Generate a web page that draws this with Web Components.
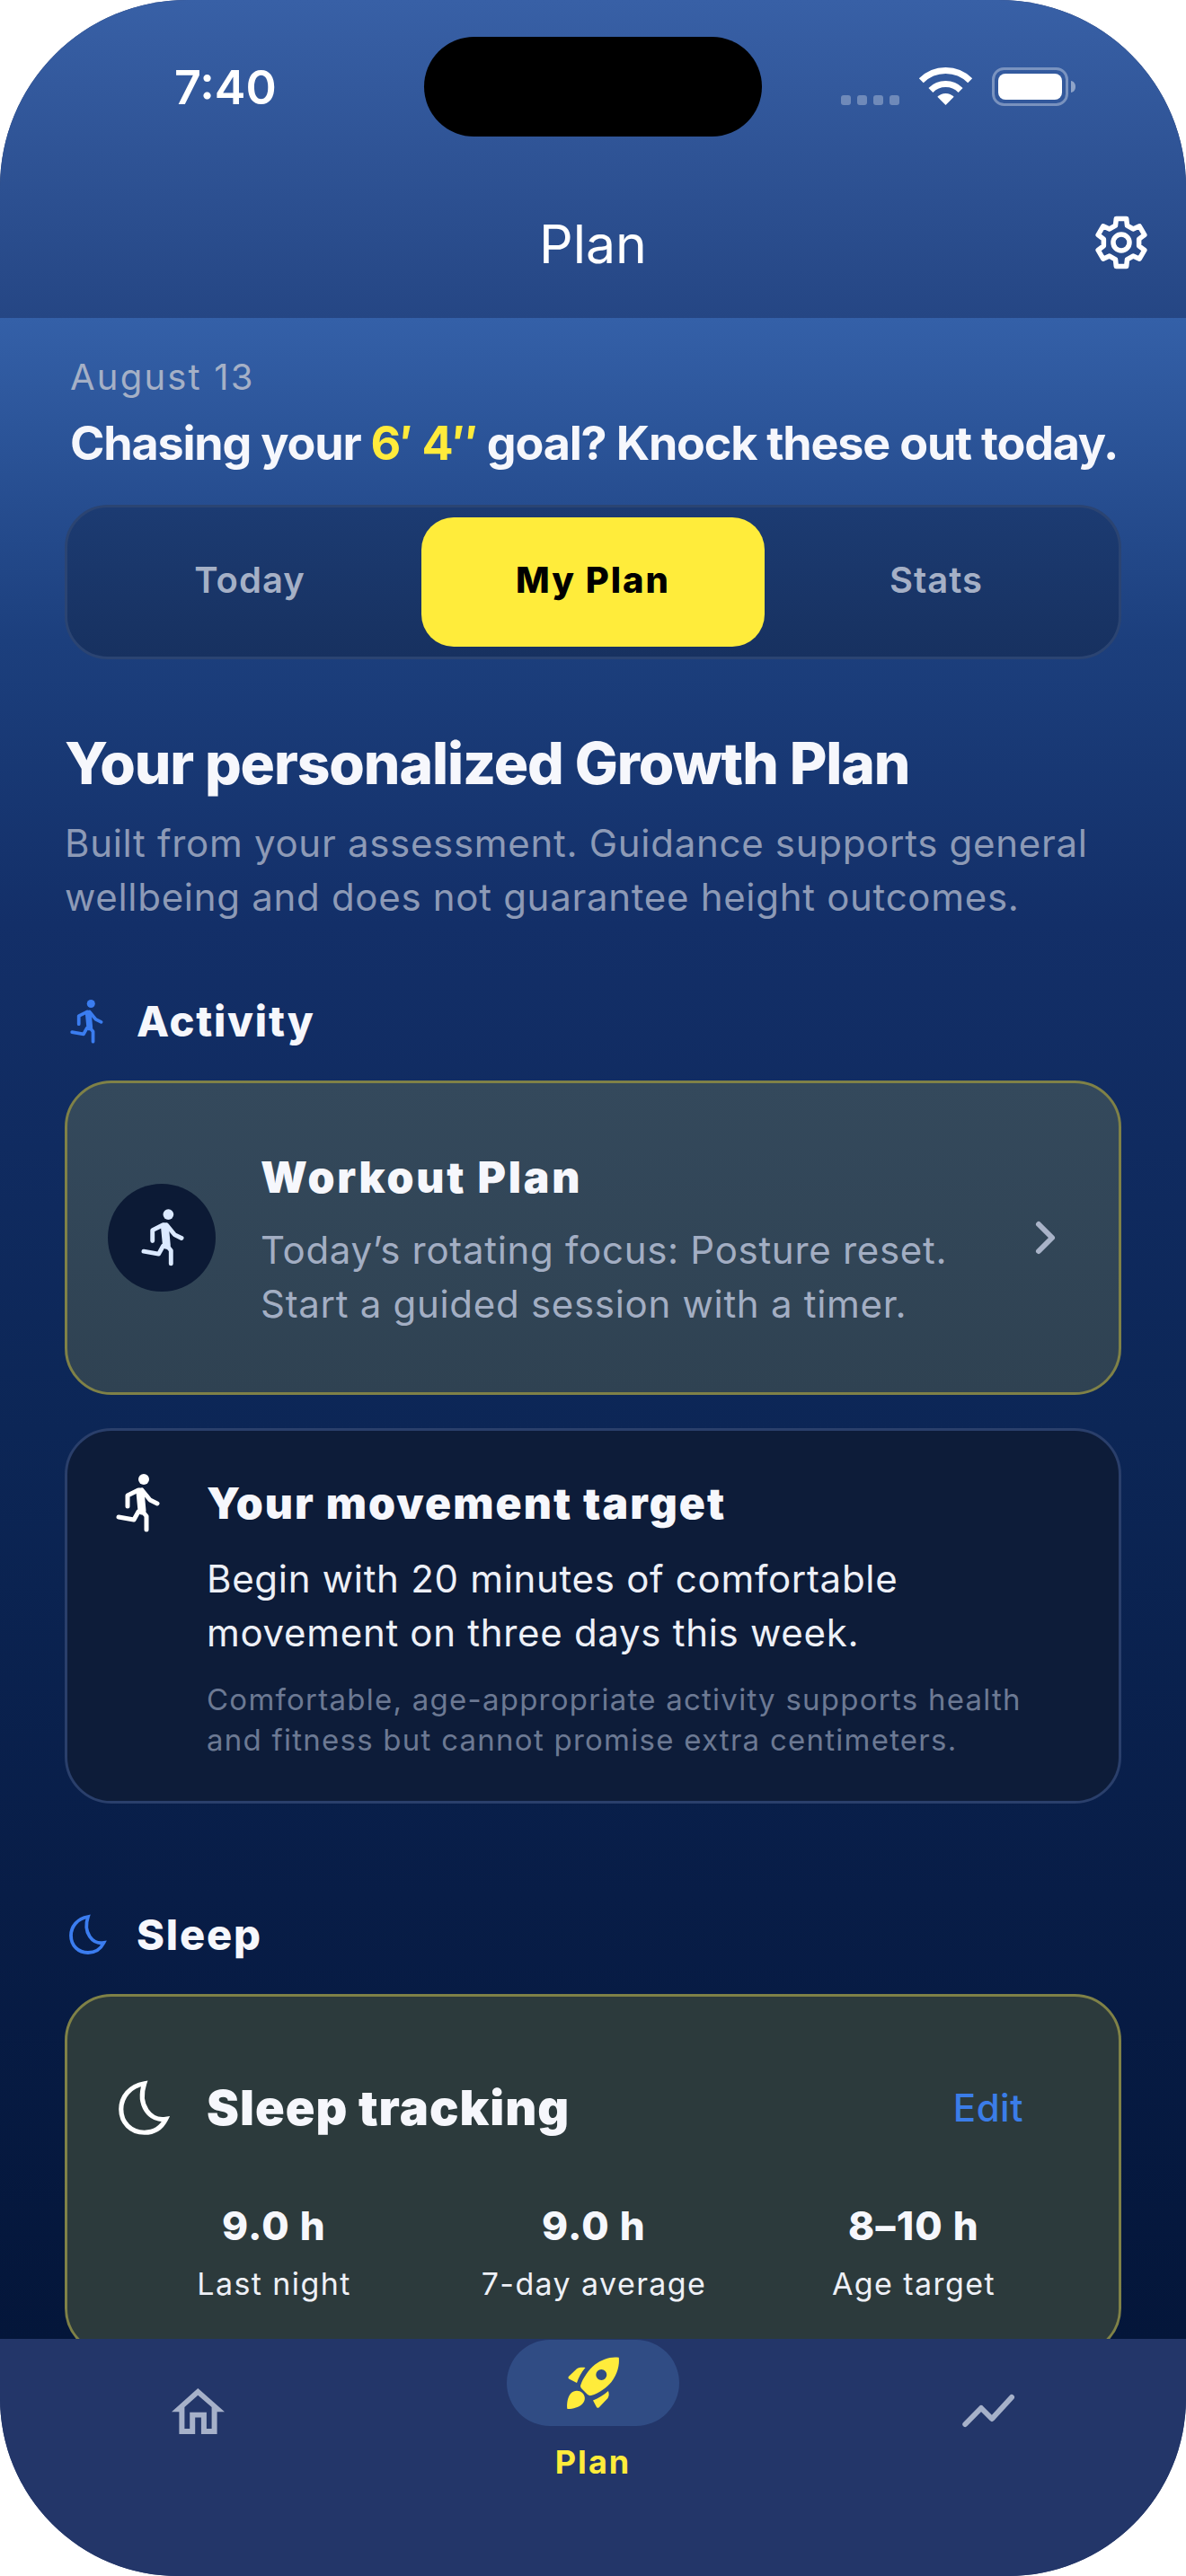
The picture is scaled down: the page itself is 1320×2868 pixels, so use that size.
<!DOCTYPE html>
<html lang="en">
<head>
<meta charset="utf-8">
<title>Plan</title>
<style>
    html, body { margin: 0; padding: 0; background: #ffffff; }
    html { height: 2868px; overflow: hidden; }
    body { font-family: "Inter", "Liberation Sans", sans-serif; }
</style>
</head>
<body>
<app-screen>
    <status-bar slot="top"></status-bar>
    <app-header slot="top">Plan</app-header>

    <date-line>August 13</date-line>
    <goal-line>Chasing your <em>6′ 4″</em> goal? Knock these out today.</goal-line>
    <segment-bar>
        <segment-item>Today</segment-item>
        <segment-item active>My Plan</segment-item>
        <segment-item>Stats</segment-item>
    </segment-bar>

    <plan-intro title="Your personalized Growth Plan">Built from your assessment. Guidance supports general wellbeing and does not guarantee height outcomes.</plan-intro>

    <section-title icon="run" w="38" h="49">Activity</section-title>
    <workout-card title="Workout Plan">Today’s rotating focus: Posture reset.<br>Start a guided session with a timer.</workout-card>
    <movement-card title="Your movement target" note="Comfortable, age-appropriate activity supports health and fitness but cannot promise extra centimeters.">Begin with 20 minutes of comfortable movement on three days this week.</movement-card>

    <section-title class="sleep" icon="moon" w="41" h="44">Sleep</section-title>
    <sleep-card title="Sleep tracking">
        <sleep-stat value="9.0 h">Last night</sleep-stat>
        <sleep-stat value="9.0 h">7-day average</sleep-stat>
        <sleep-stat value="8–10 h">Age target</sleep-stat>
    </sleep-card>

    <tab-bar slot="bottom">
        <tab-item icon="home" w="59" h="51"></tab-item>
        <tab-item icon="rocket" w="58" h="58" active>Plan</tab-item>
        <tab-item icon="trend" w="58" h="36"></tab-item>
    </tab-bar>
</app-screen>

<script>
(function () {
    "use strict";

    // gear outline, six teeth, one tooth pointing straight up
    function gearPath(cx, cy, outer, root) {
        const pts = [];
        for (let i = 0; i < 6; i++) {
            const a = i * 60 - 90;
            [[root, -19], [outer, -12], [outer, 12], [root, 19]].forEach(([r, d]) => {
                const rad = (a + d) * Math.PI / 180;
                pts.push((cx + r * Math.cos(rad)).toFixed(2) + ' ' + (cy + r * Math.sin(rad)).toFixed(2));
            });
        }
        return 'M' + pts.join('L') + 'Z';
    }

    const ICONS = {
        run: `<svg viewBox="0 0 48 65" fill="none" stroke="currentColor" stroke-linecap="round" stroke-linejoin="round">
                <circle cx="31" cy="6" r="6" fill="currentColor" stroke="none"/>
                <path d="M27 20 L29 41" stroke-width="9"/>
                <path d="M29 41 L34 47 V62" stroke-width="5"/>
                <path d="M25 42 L20 51 L3 48" stroke-width="5"/>
                <path d="M25 18 L13 24 V36" stroke-width="5"/>
                <path d="M29 18 L38 29 L46 33" stroke-width="5"/>
              </svg>`,
        moon: `<svg viewBox="0 0 41 44" fill="none" stroke="currentColor" stroke-width="3.8" stroke-linejoin="miter">
                <path d="M21 2 C9 4 2 13 2 23 C2 34 10 42 21 42 C29 42 35 38 38.5 31 C26 33 15 20 21 2 Z"/>
              </svg>`,
        gear: `<svg viewBox="0 0 58 60" fill="none" stroke="currentColor" stroke-width="5.5" stroke-linejoin="round">
                <path d="${gearPath(29, 30, 27.2, 20)}"/>
                <circle cx="29" cy="30" r="9"/>
              </svg>`,
        wifi: `<svg viewBox="0 0 57 42" fill="none" stroke="currentColor">
                <path d="M1.3 14.8 A38.5 38.5 0 0 1 55.7 14.8" stroke-width="7"/>
                <path d="M11.9 25.4 A23.5 23.5 0 0 1 45.1 25.4" stroke-width="7"/>
                <path d="M28.5 42 L19.3 32.8 A13 13 0 0 1 37.7 32.8 Z" fill="currentColor" stroke="none"/>
              </svg>`,
        battery: `<svg viewBox="0 0 94 43">
                <rect x="1.5" y="1.5" width="82" height="40" rx="12" fill="none" stroke="#ffffff" stroke-opacity=".35" stroke-width="3"/>
                <rect x="7" y="7" width="71" height="29" rx="8" fill="#ffffff"/>
                <path d="M88 15 C91 15.5 93 18 93 21.5 C93 25 91 27.5 88 28 Z" fill="#ffffff" fill-opacity=".45"/>
              </svg>`,
        chevron: `<svg viewBox="0 0 22 36" fill="none" stroke="currentColor" stroke-width="6" stroke-linecap="round" stroke-linejoin="round">
                <path d="M3 3 L18 18 L3 33"/>
              </svg>`,
        home: `<svg viewBox="0 0 59 51" fill="currentColor" fill-rule="evenodd">
                <path d="M29.3 0 L59 26.3 H50.6 V51 H8.4 V26.3 H0 Z
                         M29.3 7.7 L14.4 21 V45 H20.2 V26.7 H38.9 V45 H44.6 V21 Z
                         M26.2 32.4 V51 H32.9 V32.4 Z"/>
              </svg>`,
        rocket: `<svg viewBox="0 0 58 58" fill="currentColor" fill-rule="evenodd">
                <path d="M57.8 .8 C58.6 9 56.5 19 49.5 28 C44.5 34 36 40.5 27 43 C25.5 43.4 24.2 43 23 42 L16 35 C15 33.8 14.8 32.5 15.4 31 C18 23.5 24 14.5 31 8.8 C39 2.6 49 -.6 57.8 .8 Z
                         M38.3 14 A6 6 0 1 0 38.3 26 A6 6 0 1 0 38.3 14 Z"/>
                <path d="M1.8 22 L11 13.2 C13.5 11.8 17 11.5 20.5 12 C16 17 13 23 11 29 L2.2 24.5 C1.4 24 1.3 22.8 1.8 22 Z"/>
                <path d="M29 48.5 C35 46 41 42.5 46 38 C47 41 47 43.5 45.5 46 L36 56 C34.8 57.3 33.8 57 33 56 Z"/>
                <path d="M.2 57 C-.2 51 1 44 4.5 40.5 C8 37 13.5 37 17 40 C20.5 43.5 21 48 17.5 52 C14 56 6.5 58 1.2 58 C.6 58 .2 57.6 .2 57 Z"/>
              </svg>`,
        trend: `<svg viewBox="0 0 58 36" fill="none" stroke="currentColor" stroke-width="6" stroke-linecap="round" stroke-linejoin="round">
                <path d="M3.3 33 L21 15 L33 27 L55 3"/>
              </svg>`
    };

    class ShadowBase extends HTMLElement {
        constructor() {
            super();
            this.attachShadow({ mode: 'open' });
        }
        connectedCallback() {
            this.shadowRoot.innerHTML = this.render();
        }
        attr(name, fallback = '') {
            return this.getAttribute(name) || fallback;
        }
    }

    class PlanIcon extends ShadowBase {
        render() {
            return `<style>
                :host { display: block; flex: none; line-height: 0; width: ${this.attr('w', 40)}px; height: ${this.attr('h', 40)}px; }
                svg { display: block; width: 100%; height: 100%; overflow: visible; }
            </style>${ICONS[this.attr('name')] || ''}`;
        }
    }

    class AppScreen extends ShadowBase {
        render() {
            return `<style>
                :host { display: block; }
                .screen { width: 1320px; height: 2868px; border-radius: 208px 208px 198px 198px; overflow: hidden; display: flex; flex-direction: column; background: #233669; }
                .top { flex: none; height: 354px; background: linear-gradient(180deg, #3860a6 0%, #254684 100%); display: flex; flex-direction: column; position: relative; }
                .main { flex: 1; min-height: 0; overflow: hidden; padding: 0 72px; box-sizing: border-box;
                    background: linear-gradient(180deg, #3460a8 0%, #1c3f7d 16%, #132f68 30%, #0c2656 55%, #081d47 78%, #04163a 100%); }
                .bottom { flex: none; height: 264px; }
            </style>
            <div class="screen">
                <div class="top"><slot name="top"></slot></div>
                <div class="main"><slot></slot></div>
                <div class="bottom"><slot name="bottom"></slot></div>
            </div>`;
        }
    }

    class StatusBar extends ShadowBase {
        render() {
            return `<style>
                :host { display: block; height: 190px; position: relative; color: #fff; }
                .row { display: flex; align-items: flex-start; padding: 75px 122px 0 194px; }
                .time { font: 600 52px/46px Inter, sans-serif; }
                .right { margin-left: auto; display: flex; align-items: flex-start; }
                .dots { display: flex; gap: 7px; margin: 31px 23px 0 0; }
                .dots i { display: block; width: 11px; height: 11px; border-radius: 3px; background: rgba(255,255,255,.3); }
                .wifi { margin-right: 23px; }
                .island { position: absolute; left: 472px; top: 41px; width: 376px; height: 111px; border-radius: 56px; background: #000; }
            </style>
            <div class="island"></div>
            <div class="row">
                <div class="time">7:40</div>
                <div class="right">
                    <div class="dots"><i></i><i></i><i></i><i></i></div>
                    <plan-icon class="wifi" name="wifi" w="57" h="42"></plan-icon>
                    <plan-icon name="battery" w="94" h="43"></plan-icon>
                </div>
            </div>`;
        }
    }

    class AppHeader extends ShadowBase {
        render() {
            return `<style>
                :host { display: block; color: #fff; }
                .bar { height: 164px; position: relative; display: flex; justify-content: center; }
                .title { font: 400 59px/164px Inter, sans-serif; }
                plan-icon { position: absolute; right: 43px; top: 50px; }
            </style>
            <div class="bar">
                <div class="title"><slot></slot></div>
                <plan-icon name="gear" w="58" h="60"></plan-icon>
            </div>`;
        }
    }

    class DateLine extends ShadowBase {
        render() {
            return `<style>
                :host { display: block; padding: 42px 0 0 6px; font: 400 40px/48px Inter, sans-serif; letter-spacing: 2.2px; color: #a5b0c6; }
            </style><slot></slot>`;
        }
    }

    class GoalLine extends ShadowBase {
        render() {
            return `<style>
                :host { display: block; margin-top: 20px; padding-left: 6px; font: 700 52px/60px Inter, sans-serif; letter-spacing: -1.18px; color: #f6f7fc; white-space: nowrap; }
                ::slotted(em) { font-style: normal; color: #ffeb3b; }
            </style><slot></slot>`;
        }
    }

    class SegmentBar extends ShadowBase {
        render() {
            return `<style>
                :host { display: grid; grid-template-columns: repeat(3, 382px); justify-content: center; align-items: stretch; box-sizing: border-box;
                    margin-top: 38px; height: 172px; padding: 11px 0; border: 3px solid #2b4472; border-radius: 48px;
                    background: linear-gradient(180deg, #1c3b72 0%, #173160 100%); }
            </style><slot></slot>`;
        }
    }

    class SegmentItem extends ShadowBase {
        render() {
            const on = this.hasAttribute('active');
            return `<style>
                :host { display: flex; align-items: center; justify-content: center; padding-bottom: 4px; box-sizing: border-box;
                    font: ${on ? 800 : 600} 40px/48px Inter, sans-serif; letter-spacing: ${on ? 2 : 1}px;
                    color: ${on ? '#000' : '#a5b0c6'}; border-radius: 36px; background: ${on ? '#ffec3b' : 'transparent'}; }
            </style><slot></slot>`;
        }
    }

    class PlanIntro extends ShadowBase {
        render() {
            return `<style>
                :host { display: block; margin-top: 78px; }
                h2 { margin: 0; font: 800 64px/76px Inter, sans-serif; letter-spacing: -1.1px; color: #f6f7fc; white-space: nowrap; }
                p { margin: 21px 0 0; font: 400 42px/60px Inter, sans-serif; letter-spacing: .7px; color: #8d9ab6; }
            </style>
            <h2>${this.attr('title')}</h2>
            <p><slot></slot></p>`;
        }
    }

    class SectionTitle extends ShadowBase {
        render() {
            return `<style>
                :host { display: flex; align-items: center; height: 60px; margin-top: 78px; padding-left: 5px; }
                :host(.sleep) { margin-top: 116px; }
                plan-icon { color: #3b7df0; }
                span { margin-left: ${152 - 77 - Number(this.attr('w'))}px; font: 800 47px/60px Inter, sans-serif; letter-spacing: 1.8px; color: #f6f7fc; }
            </style>
            <plan-icon name="${this.attr('icon')}" w="${this.attr('w')}" h="${this.attr('h')}"></plan-icon>
            <span><slot></slot></span>`;
        }
    }

    class WorkoutCard extends ShadowBase {
        render() {
            return `<style>
                :host { display: flex; align-items: center; box-sizing: border-box; height: 350px; margin-top: 36px; padding: 6px 70px 0 45px;
                    border: 3px solid #7f8147; border-radius: 52px; background: linear-gradient(180deg, #34495c 0%, #2f4252 100%); }
                .disc { width: 120px; height: 120px; margin-top: -6px; border-radius: 50%; background: #0c1a35; flex: none; display: flex; align-items: center; justify-content: center; color: #dbe9ff; }
                .text { flex: 1; margin-left: 50px; }
                h3 { margin: 0; font: 900 48px/60px Inter, sans-serif; letter-spacing: 2.8px; color: #f6f7fc; }
                p { margin: 21px 0 0; font: 400 42px/60px Inter, sans-serif; letter-spacing: .7px; color: #a3aec3; }
                .chev { color: #a9b3c8; margin-top: -6px; }
            </style>
            <div class="disc"><plan-icon name="run" w="47" h="64"></plan-icon></div>
            <div class="text"><h3>${this.attr('title')}</h3><p><slot></slot></p></div>
            <plan-icon class="chev" name="chevron" w="22" h="36"></plan-icon>`;
        }
    }

    class MovementCard extends ShadowBase {
        render() {
            return `<style>
                :host { display: flex; box-sizing: border-box; height: 418px; margin-top: 37px; padding: 51px 50px 0 54px;
                    border: 3px solid #2a3f6b; border-radius: 52px; background: #0d1c39; }
                .text { margin-left: 53px; }
                h3 { margin: 0; height: 60px; font: 900 48px/60px Inter, sans-serif; letter-spacing: 2.1px; color: #f6f7fc; }
                p { margin: 24px 0 0; font: 400 42px/60px Inter, sans-serif; letter-spacing: .7px; color: #edf0f7; }
                small { display: block; margin-top: 22px; font: 400 33px/45px Inter, sans-serif; letter-spacing: 1.25px; color: #6c7993; }
                plan-icon { color: #fff; margin-top: -3px; }
            </style>
            <plan-icon name="run" w="48" h="65"></plan-icon>
            <div class="text">
                <h3>${this.attr('title')}</h3>
                <p><slot></slot></p>
                <small>${this.attr('note')}</small>
            </div>`;
        }
    }

    class SleepCard extends ShadowBase {
        render() {
            return `<style>
                :host { display: block; box-sizing: border-box; height: 402px; margin-top: 36px; padding: 91px 51px 0 57px;
                    border: 3px solid #7f8147; border-radius: 52px; background: #2c3a3c; }
                .head { display: flex; align-items: center; height: 66px; color: #fff; }
                h3 { margin: 0 0 0 42px; font: 900 54px/66px Inter, sans-serif; letter-spacing: 1px; color: #f6f7fc; }
                .edit { margin-left: auto; margin-right: 55px; font: 500 42px/50px Inter, sans-serif; letter-spacing: .5px; color: #3b7de8; }
                .stats { display: grid; grid-template-columns: repeat(3, 356px); margin-top: 73px; margin-left: -5px; }
            </style>
            <div class="head">
                <plan-icon name="moon" w="56" h="60"></plan-icon>
                <h3>${this.attr('title')}</h3>
                <span class="edit">Edit</span>
            </div>
            <div class="stats"><slot></slot></div>`;
        }
    }

    class SleepStat extends ShadowBase {
        render() {
            return `<style>
                :host { display: block; text-align: center; }
                b { display: block; font: 800 44px/50px Inter, sans-serif; letter-spacing: 1.2px; color: #f6f7fc; }
                span { display: block; margin-top: 18px; font: 400 34px/44px Inter, sans-serif; letter-spacing: 1.4px; color: #eef0f6; }
            </style>
            <b>${this.attr('value')}</b><span><slot></slot></span>`;
        }
    }

    class TabBar extends ShadowBase {
        render() {
            return `<style>
                :host { display: grid; grid-template-columns: repeat(3, 1fr); height: 264px; background: #233669; }
            </style><slot></slot>`;
        }
    }

    class TabItem extends ShadowBase {
        render() {
            const on = this.hasAttribute('active');
            return `<style>
                :host { display: flex; flex-direction: column; align-items: center; color: ${on ? '#ffec3b' : '#a6b1c9'}; }
                .pill { width: 192px; height: 96px; margin-top: 1px; border-radius: 48px; display: flex; align-items: center; justify-content: center; background: ${on ? '#304c84' : 'transparent'}; }
                .label { margin-top: 18px; font: 700 36px/44px Inter, sans-serif; letter-spacing: 2px; }
                :host(:not([active])) .pill { height: 80px; margin-top: 40px; }
            </style>
            <div class="pill"><plan-icon name="${this.attr('icon')}" w="${this.attr('w')}" h="${this.attr('h')}"></plan-icon></div>
            <div class="label"><slot></slot></div>`;
        }
    }

    const defs = {
        'plan-icon': PlanIcon, 'app-screen': AppScreen, 'status-bar': StatusBar, 'app-header': AppHeader,
        'date-line': DateLine, 'goal-line': GoalLine, 'segment-bar': SegmentBar, 'segment-item': SegmentItem,
        'plan-intro': PlanIntro, 'section-title': SectionTitle, 'workout-card': WorkoutCard, 'movement-card': MovementCard,
        'sleep-card': SleepCard, 'sleep-stat': SleepStat, 'tab-bar': TabBar, 'tab-item': TabItem
    };
    Object.keys(defs).forEach((name) => customElements.define(name, defs[name]));
})();
</script>
</body>
</html>
